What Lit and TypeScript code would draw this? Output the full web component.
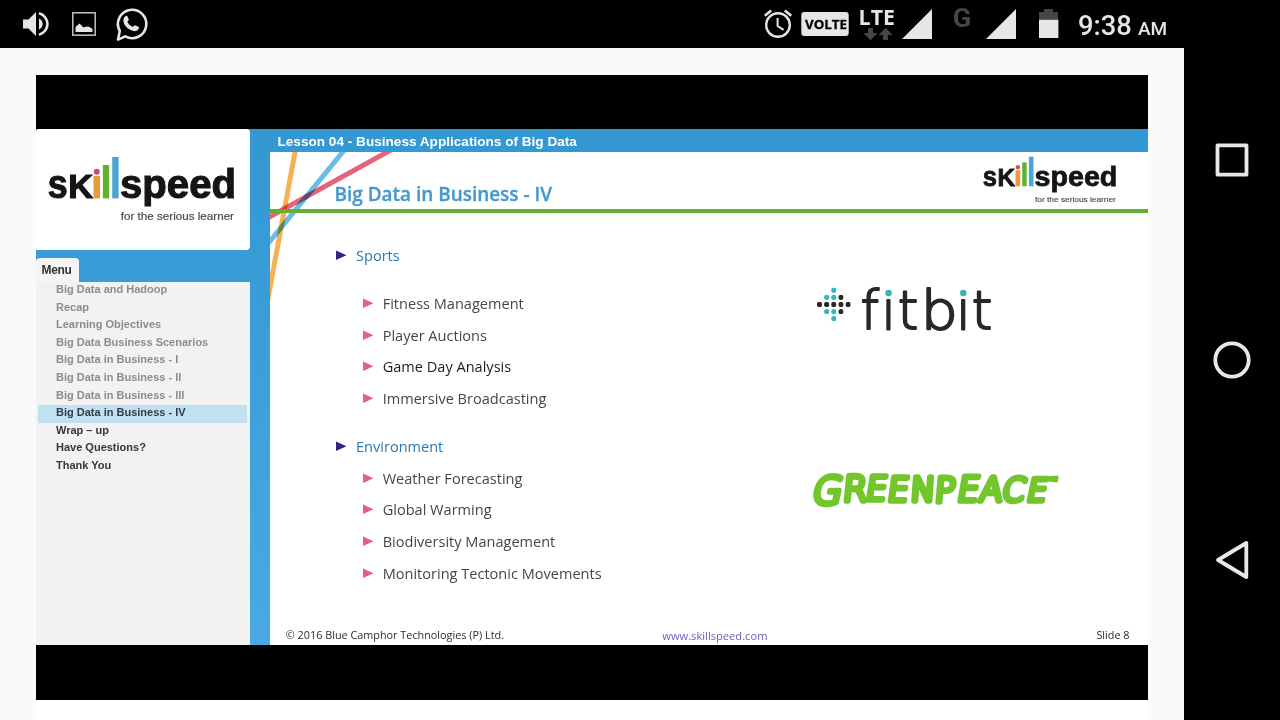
import { LitElement, html, css } from "lit";
import { customElement } from "lit/decorators.js";
import { classMap } from "lit/directives/class-map.js";

/** Skillspeed word mark, scaled by its host's width. */
@customElement("skill-logo")
export class SkillLogo extends LitElement {
  static styles = css`
    :host { display: block; }
    svg { display: block; width: 100%; overflow: visible; }
    .word { font: bold 40px "Liberation Sans", Arial, sans-serif; fill: #171415; stroke: #171415; stroke-width: 1.1; }
    .cap { font-size: 32.5px; }
    .tag { font: 11.3px "Liberation Sans", Arial, sans-serif; fill: #4a4a4c; stroke: #4a4a4c; stroke-width: 0.2; }
  `;
  render() {
    return html`<svg viewBox="48 156 188 68">
      <text class="word" x="47.8" y="198" textLength="20" lengthAdjust="spacingAndGlyphs">s</text>
      <text class="word cap" x="68.4" y="198" textLength="24.8" lengthAdjust="spacingAndGlyphs">K</text>
      <rect x="93.6" y="176" width="6.6" height="22.5" fill="#eb9a3a" />
      <circle cx="96.9" cy="171.8" r="3" fill="#cf4a68" />
      <rect x="103" y="165" width="6.3" height="33.5" fill="#63b22f" />
      <rect x="112.4" y="157" width="6.4" height="41.5" fill="#4ba3d6" />
      <text class="word" x="120.2" y="198" textLength="116.4" lengthAdjust="spacingAndGlyphs">speed</text>
      <text class="tag" x="121" y="220.5" textLength="113.5" lengthAdjust="spacingAndGlyphs">for the serious learner</text>
    </svg>`;
  }
}

@customElement("status-bar")
export class StatusBar extends LitElement {
  static styles = css`
    :host {
      display: flex; justify-content: space-between; height: 48px; box-sizing: border-box;
      background: #000; color: #e6e6e6; font-family: Roboto, sans-serif;
    }
    svg { display: block; }
    .time { display: flex; align-items: baseline; line-height: 52px; height: 48px; padding: 0 15.500px 0 8px; }
    .clock { font-size: 27.3px; font-weight: 500; width: 60px; }
    .ampm { font-size: 19px; font-weight: 500; width: 30.500px; }
    .side { display: flex; }
    .volte { font: bold 13.2px "Open Sans", sans-serif; fill: #000; stroke: #000; stroke-width: 0.3; }
    .lte { font: bold 20.5px "Open Sans", sans-serif; fill: #e6e6e6; }
    .g { font: bold 26px Roboto, sans-serif; fill: #454545; }
  `;
  render() {
    return html`
      <svg width="160" height="48" fill="#e6e6e6">
        <path d="M23 19.5h5.500l7.500-7.500v24l-7.500-7.500H23z" />
        <path d="M39 18.500a6 6 0 0 1 0 11z" />
        <path d="M39 13.300a11 11 0 0 1 0 21.400" fill="none" stroke="#e6e6e6" stroke-width="2.600" />
        <rect x="72.800" y="12.800" width="22.400" height="22.400" fill="none" stroke="#c4c4c4" stroke-width="1.500" />
        <path d="M75.500 32v-5l4-3.500 4 4 3-1 3 .5 3 2v3z" />
        <path d="M118 39.600L119.800 31a14.200 14.200 0 1 1 5.500 5.400z" fill="none" stroke="#e6e6e6" stroke-width="2.600" stroke-linejoin="round" />
        <path d="M125.200 16.300c.9-.9 1.900-.7 2.300.2l1.200 2.800c.2.600-.2 1.100-1.300 2.400 1.200 2.500 3 4.200 5.600 5.200 1.200-1.400 1.600-1.900 2.200-1.700l3.200 1.600c.7.400.6 1 .3 1.900-.8 2-3 2.700-5 2.400-5-1-8.600-4.600-10-8.300-.7-2.500-.2-5 1.500-6.500z" />
      </svg>
      <div class="side">
        <svg width="310" height="48" viewBox="760 0 310 48" fill="#e6e6e6">
          <g fill="none" stroke="#e6e6e6" stroke-width="2.400">
            <circle cx="778" cy="25" r="11.800" />
            <path d="M764.800 15.800l6.400-5.300M791.200 15.800l-6.400-5.300" stroke-width="2.600" />
            <path d="M777.600 18v8l6 3.800" stroke-width="2" />
          </g>
          <rect x="801.300" y="12" width="47.400" height="24" rx="3" />
          <text class="volte" x="805" y="28.900" textLength="42" lengthAdjust="spacingAndGlyphs">VOLTE</text>
          <text class="lte" x="858.600" y="25" textLength="36.300" lengthAdjust="spacingAndGlyphs">LTE</text>
          <path fill="#454545" d="M868 28h5v5h4.500l-7 7.200-7-7.200h4.500zM883 40v-5h-4.300l7-7.200 7 7.200H888v5z" />
          <path d="M932 9v30h-30zM1016 9v30h-30z" />
          <text class="g" x="952.800" y="26.600" textLength="18.500" lengthAdjust="spacingAndGlyphs">G</text>
          <path fill="#454545" d="M1039 20v-8h5v-3h9v3h5v8z" />
          <rect x="1039" y="19.800" width="19.400" height="18.200" />
        </svg>
        <div class="time"><span class="clock">9:38</span><span class="ampm">AM</span></div>
      </div>`;
  }
}

@customElement("nav-rail")
export class NavRail extends LitElement {
  static styles = css`
    :host { display: block; width: 96px; height: 720px; background: #000; }
    svg { display: block; fill: none; stroke: #e8e8e8; stroke-width: 3.800; stroke-linejoin: round; }
  `;
  render() {
    return html`<svg width="96" height="720">
      <rect x="33.500" y="145.300" width="29" height="29.400" />
      <circle cx="48" cy="360" r="16.700" />
      <path d="M34 560l28.300-17v34z" />
    </svg>`;
  }
}

interface Entry { label: string; state: "seen" | "current" | "next"; }
const lessons: Entry[] = [
  { label: "Big Data and Hadoop", state: "seen" },
  { label: "Recap", state: "seen" },
  { label: "Learning Objectives", state: "seen" },
  { label: "Big Data Business Scenarios", state: "seen" },
  { label: "Big Data in Business - I", state: "seen" },
  { label: "Big Data in Business - II", state: "seen" },
  { label: "Big Data in Business - III", state: "seen" },
  { label: "Big Data in Business - IV", state: "current" },
  { label: "Wrap – up", state: "next" },
  { label: "Have Questions?", state: "next" },
  { label: "Thank You", state: "next" },
];

@customElement("lesson-menu")
export class LessonMenu extends LitElement {
  static styles = css`
    :host { display: flex; flex-direction: column; width: 214px; font-family: "Liberation Sans", Arial, sans-serif; }
    .brand { height: 120.500px; box-sizing: border-box; background: #fff; border-radius: 3px 4px 4px 0; padding: 27px 14.500px 0 12px; }
    .tab {
      margin-top: 8.500px; width: 43px; height: 24px; box-sizing: border-box; padding-left: 5.500px;
      background: #f5f5f5; border-radius: 4px 4px 0 0; font: bold 12px/24px "Liberation Sans", Arial, sans-serif; color: #333;
      letter-spacing: -0.300px;
    }
    .list { flex: 1; background: #f2f2f2; padding: 0 3px 0 2px; }
    .item { height: 17.600px; padding-left: 18px; font-size: 11px; line-height: 15px; font-weight: bold; color: #8c8c8c; white-space: nowrap; }
    .current { background: #bfe1f1; color: #333d44; }
    .next { color: #363636; }
  `;
  render() {
    return html`
      <div class="brand"><skill-logo></skill-logo></div>
      <div class="tab">Menu</div>
      <div class="list">
        ${lessons.map((l) => html`<div class=${classMap({ item: true, [l.state]: true })}>${l.label}</div>`)}
      </div>`;
  }
}

interface Topic { title: string; spaced: boolean; points: { text: string; strong?: boolean }[]; }
const topics: Topic[] = [
  { title: "Sports", spaced: true, points: [
    { text: "Fitness Management" }, { text: "Player Auctions" },
    { text: "Game Day Analysis", strong: true }, { text: "Immersive Broadcasting" } ] },
  { title: "Environment", spaced: false, points: [
    { text: "Weather Forecasting" }, { text: "Global Warming" },
    { text: "Biodiversity Management" }, { text: "Monitoring Tectonic Movements" } ] },
];

const fitbitDots: [number, number, boolean][] = [
  [2, 0, true], [1, 1, true], [2, 1, true], [3, 1, false],
  [0, 2, false], [1, 2, false], [2, 2, false], [3, 2, false], [4, 2, false],
  [1, 3, true], [2, 3, true], [3, 3, false], [2, 4, true],
];
/** Letter, left edge, horizontal stretch. */
const fitbitLetters: [string, number, number][] = [
  ["f", 860.5, 0.99], ["i", 881.6, 0.97], ["t", 897.7, 0.99], ["b", 920.7, 1.1], ["i", 956.3, 0.97], ["t", 971.7, 0.99],
];
/** Letter, left edge, baseline, size, slant in degrees. */
const greenLetters: [string, number, number, number, number][] = [
  ["G", 0.5, 31.5, 38, -12], ["R", 32, 29, 35, -6], ["E", 54.500, 28, 33, -9], ["E", 76.500, 28.500, 33, -8],
  ["N", 100, 28.500, 33, -4], ["P", 124, 30, 34, -5], ["E", 146, 29, 34, -10], ["A", 168.500, 28.500, 33, -8],
  ["C", 190.500, 28.500, 32, -12], ["E", 215.500, 28.500, 31, -12],
];

@customElement("lesson-slide")
export class LessonSlide extends LitElement {
  static styles = css`
    :host { display: flex; flex-direction: column; flex: 1; font-family: "Open Sans", sans-serif; }
    svg { display: block; }
    .bar { height: 23px; padding-left: 7.500px; font: bold 13.600px/25px "Liberation Sans", Arial, sans-serif; color: #fff; }
    .page { position: relative; flex: 1; display: flex; flex-direction: column; background: #fff; overflow: hidden; }
    .rays { position: absolute; left: 0; top: 0; }
    .ray { mix-blend-mode: multiply; fill: none; }
    .head { height: 61px; box-sizing: border-box; border-bottom: 4.500px solid #65b032; display: flex; justify-content: space-between; padding: 4px 31px 0 64.500px; }
    h1 { margin: 0; font-size: 18.950px; font-weight: 600; line-height: 77px; color: #4499cd; -webkit-text-stroke: 0.3px #4499cd; }
    .logo { width: 134px; }
    .body { flex: 1; display: flex; justify-content: space-between; padding: 26px 88px 0 66px; }
    .topics { display: flex; flex-direction: column; gap: 16px; }
    .row { display: flex; align-items: center; height: 31.750px; font-size: 14.560px; color: #464646; white-space: nowrap; }
    .title { color: #2878b4; gap: 9.500px; }
    .spaced { margin-bottom: 16.200px; }
    .point { padding-left: 27px; gap: 9.200px; }
    .strong { color: #1c1c1c; }
    .logos { width: 250px; padding-top: 41px; }
    .mark { overflow: visible; }
    .gp { margin-top: 136px; }
    .fit { font: 200 53px "DejaVu Sans", sans-serif; fill: #2a2728; stroke: #2a2728; stroke-width: 2; stroke-linejoin: round; }
    .green { font-family: "DejaVu Sans", sans-serif; font-weight: 200; fill: #72c52b; stroke: #72c52b; stroke-width: 5.500; stroke-linejoin: round; }
    .foot { display: grid; grid-template-columns: 376.500px 1fr auto; padding: 0 18.500px 0 15.800px; height: 20px; font-size: 10.830px; line-height: 20px; color: #2b2b2b; }
    .link { font-size: 11.150px; line-height: 22px; color: #6e5cc0; }
  `;
  private arrow(fill: string) {
    return html`<svg width="10.500" height="10" viewBox="0 0 10.500 10"><path d="M0 .5v9.500L10.500 5.300z" fill=${fill} /></svg>`;
  }
  render() {
    return html`
      <div class="bar">Lesson 04 - Business Applications of Big Data</div>
      <div class="page">
        <div class="head"><h1>Big Data in Business - IV</h1><div class="logo"><skill-logo></skill-logo></div></div>
        <svg class="rays" width="140" height="150">
          <path class="ray" d="M25.800-4L-3 152" stroke="#f5b252" stroke-width="5" />
          <path class="ray" d="M76-4L-4 94" stroke="#69bde5" stroke-width="5" />
          <path class="ray" d="M124.500-4L-6 68" stroke="#e5637b" stroke-width="5" />
          <rect x="0" y="57" width="140" height="4" fill="#65b032" />
        </svg>
        <div class="body">
          <div class="topics">
            ${topics.map((t) => html`<div>
              <div class=${classMap({ row: true, title: true, spaced: t.spaced })}>${this.arrow("#2a2a86")}<span>${t.title}</span></div>
              ${t.points.map((p) => html`<div class=${classMap({ row: true, point: true, strong: !!p.strong })}>${this.arrow("#e5607a")}<span>${p.text}</span></div>`)}
            </div>`)}
          </div>
          <div class="logos">
            <svg class="mark" width="250" height="56" viewBox="810 281 250 56">
              ${fitbitDots.map(([c, r, teal]) => this.dot(c, r, teal))}
              ${fitbitLetters.map(([ch, x, s]) => html`<svg class="mark"><text class="fit" transform="translate(${x} 330.300) scale(${s} 1)">${ch}</text></svg>`)}
              ${[888.6, 963.3].map((x) => html`<svg class="mark"><circle cx=${x} cy="292.200" r="5.500" fill="#fff" /><circle cx=${x} cy="294" r="3.300" fill="#35b6b8" /></svg>`)}
            </svg>
            <svg class="mark gp" width="250" height="44" viewBox="0 0 250 44">
              ${greenLetters.map((g) => this.leaf(g))}
              <path d="M228 6.800L247 5l-.5 4z" fill="#72c52b" stroke="#72c52b" stroke-width="3" stroke-linejoin="round" />
            </svg>
          </div>
        </div>
        <div class="foot"><span>© 2016 Blue Camphor Technologies (P) Ltd.</span><span class="link">www.skillspeed.com</span><span>Slide 8</span></div>
      </div>`;
  }
  private dot(c: number, r: number, teal: boolean) {
    return html`<svg x="${816.8 + c * 7.15}" y="${288.5 + r * 7.1}" width="5.400" height="5.400" viewBox="0 0 5.400 5.400"><circle cx="2.700" cy="2.700" r="2.600" fill=${teal ? "#35b6b8" : "#2a2728"} /></svg>`;
  }
  private leaf([ch, x, y, size, slant]: [string, number, number, number, number]) {
    return html`<svg class="mark"><text class="green" font-size=${size} transform="translate(${x} ${y}) skewX(${slant})">${ch}</text></svg>`;
  }
}

@customElement("app-root")
export class AppRoot extends LitElement {
  static styles = css`
    :host { display: flex; width: 1280px; height: 720px; overflow: hidden; background: #fafafa; }
    .screen { width: 1184px; display: flex; flex-direction: column; }
    .content { flex: 1; padding: 27px 36px 0; display: flex; flex-direction: column; }
    .video { height: 516px; padding: 54px 0 55px; background: #000; display: flex; }
    .player { flex: 1; display: flex; gap: 20px; background: linear-gradient(#3398d2, #3a9dd8 35%, #4aa9e2); }
    .below { flex: 1; background: #fff; }
  `;
  render() {
    return html`
      <div class="screen">
        <status-bar></status-bar>
        <div class="content">
          <div class="video"><div class="player"><lesson-menu></lesson-menu><lesson-slide></lesson-slide></div></div>
          <div class="below"></div>
        </div>
      </div>
      <nav-rail></nav-rail>`;
  }
}
